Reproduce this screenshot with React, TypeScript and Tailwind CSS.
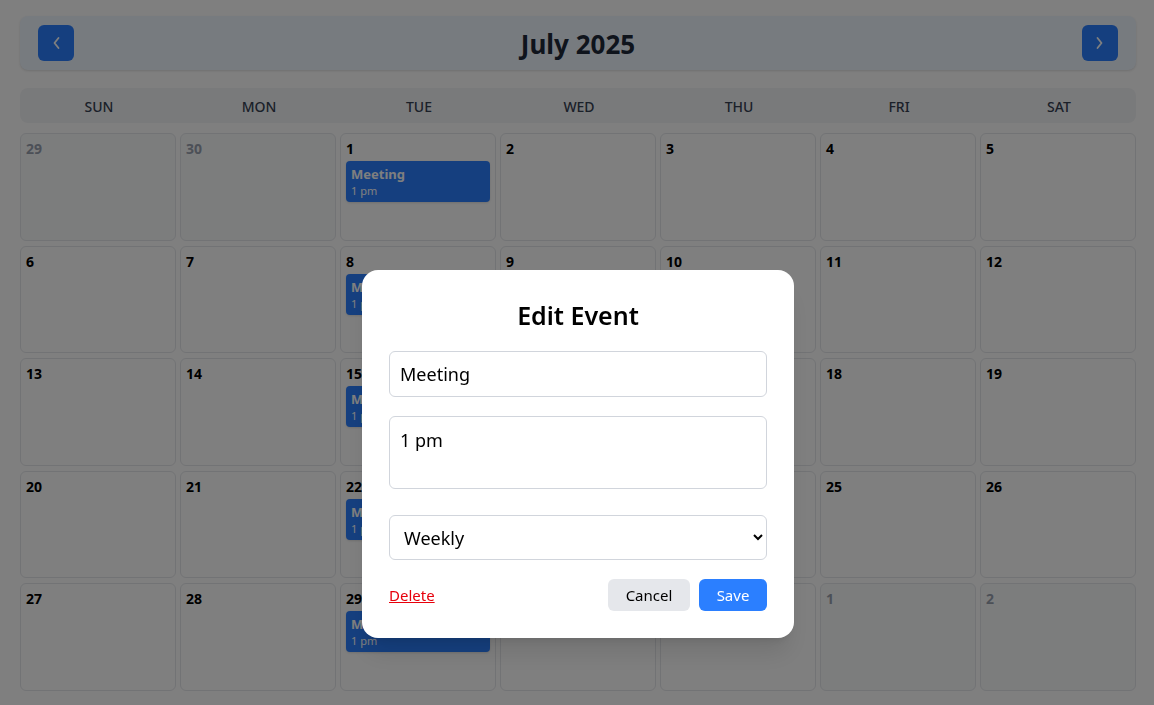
import React, { useState } from 'react';

type Day = { n: number; current: boolean; event?: boolean };

const weekdays = ['SUN', 'MON', 'TUE', 'WED', 'THU', 'FRI', 'SAT'];

const buildDays = (): Day[] => {
  const days: Day[] = [{ n: 29, current: false }, { n: 30, current: false }];
  for (let d = 1; d <= 31; d++) {
    // weekly meeting every tuesday
    days.push({ n: d, current: true, event: (d - 1) % 7 === 0 });
  }
  days.push({ n: 1, current: false }, { n: 2, current: false });
  return days;
};

const Chevron: React.FC<{ dir: 'left' | 'right' }> = ({ dir }) => (
  <svg width="9" height="14" viewBox="0 0 9 14" fill="none">
    <polyline
      points={dir === 'left' ? '6.5,2 2.5,7 6.5,12' : '2.5,2 6.5,7 2.5,12'}
      stroke="white"
      strokeWidth="1.8"
      strokeLinecap="round"
      strokeLinejoin="round"
    />
  </svg>
);

const App: React.FC = () => {
  const [title, setTitle] = useState('Meeting');
  const [desc, setDesc] = useState('1 pm');
  const [repeat, setRepeat] = useState('weekly');
  const days = buildDays();

  return (
    <div className="min-h-screen bg-white pt-4 pl-5 pr-[18px] pb-4 font-['Noto_Sans',sans-serif]">
      <div className="flex h-[54px] items-center justify-between rounded-lg bg-blue-50 px-[18px] shadow-sm">
        <button className="flex h-9 w-9 items-center justify-center rounded-md bg-blue-500">
          <Chevron dir="left" />
        </button>
        <h2 className="pt-[2px] text-[26px] font-bold text-gray-800">July 2025</h2>
        <button className="flex h-9 w-9 items-center justify-center rounded-md bg-blue-500">
          <Chevron dir="right" />
        </button>
      </div>

      <div className="mt-[18px] grid h-[35px] grid-cols-7 items-center gap-x-1 rounded-lg bg-gray-100 pt-[2px]">
        {weekdays.map(w => (
          <div key={w} className="pl-[2px] text-center text-sm font-medium text-gray-700">{w}</div>
        ))}
      </div>

      <div className="mt-[10px] grid grid-cols-7 grid-rows-[repeat(5,107.5px)] gap-x-1 gap-y-[5px]">
        {days.map((d, i) => (
          <div
            key={i}
            className={`rounded-md border border-gray-200 p-[5px] ${d.current ? 'bg-white' : 'bg-gray-50'}`}
          >
            <div className={`text-sm leading-5 font-bold ${d.current ? 'text-black' : 'text-gray-400'}`}>{d.n}</div>
            {d.event && (
              <div className="mt-0.5 rounded bg-blue-500 px-[5px] py-1 text-white shadow-sm">
                <div className="text-[13px] leading-[18px] font-bold">Meeting</div>
                <div className="text-[11px] leading-[15px]">1 pm</div>
              </div>
            )}
          </div>
        ))}
      </div>

      <div className="fixed inset-0 flex justify-center bg-black/50 pt-[270px] pl-[2px]">
        <div className="h-fit w-[432px] rounded-2xl bg-white p-[27px] shadow-xl">
          <h3 className="mb-[18px] text-center text-[25px] leading-9 font-semibold text-black">Edit Event</h3>
          <input
            value={title}
            onChange={e => setTitle(e.target.value)}
            className="mb-[19px] block h-[46px] w-full rounded-md border border-gray-300 px-[10px] text-lg text-black outline-none"
          />
          <textarea
            value={desc}
            onChange={e => setDesc(e.target.value)}
            className="mb-[26px] block h-[73px] w-full resize-none rounded-md border border-gray-300 px-[10px] py-[9px] text-lg leading-7 text-black outline-none"
          />
          <select
            value={repeat}
            onChange={e => setRepeat(e.target.value)}
            className="block h-[45px] w-full rounded-md border border-gray-300 bg-white px-[10px] text-lg text-black outline-none"
          >
            <option value="none">Does not repeat</option>
            <option value="daily">Daily</option>
            <option value="weekly">Weekly</option>
            <option value="monthly">Monthly</option>
          </select>
          <div className="mt-[19px] flex items-center justify-between">
            <button className="text-[15px] text-red-600 underline">Delete</button>
            <div className="flex gap-[9px]">
              <button className="h-8 w-[82px] rounded-md bg-gray-200 text-[15px] text-black">Cancel</button>
              <button className="h-8 w-[68px] rounded-md bg-blue-500 text-[15px] text-white">Save</button>
            </div>
          </div>
        </div>
      </div>
    </div>
  );
};

export default App;
